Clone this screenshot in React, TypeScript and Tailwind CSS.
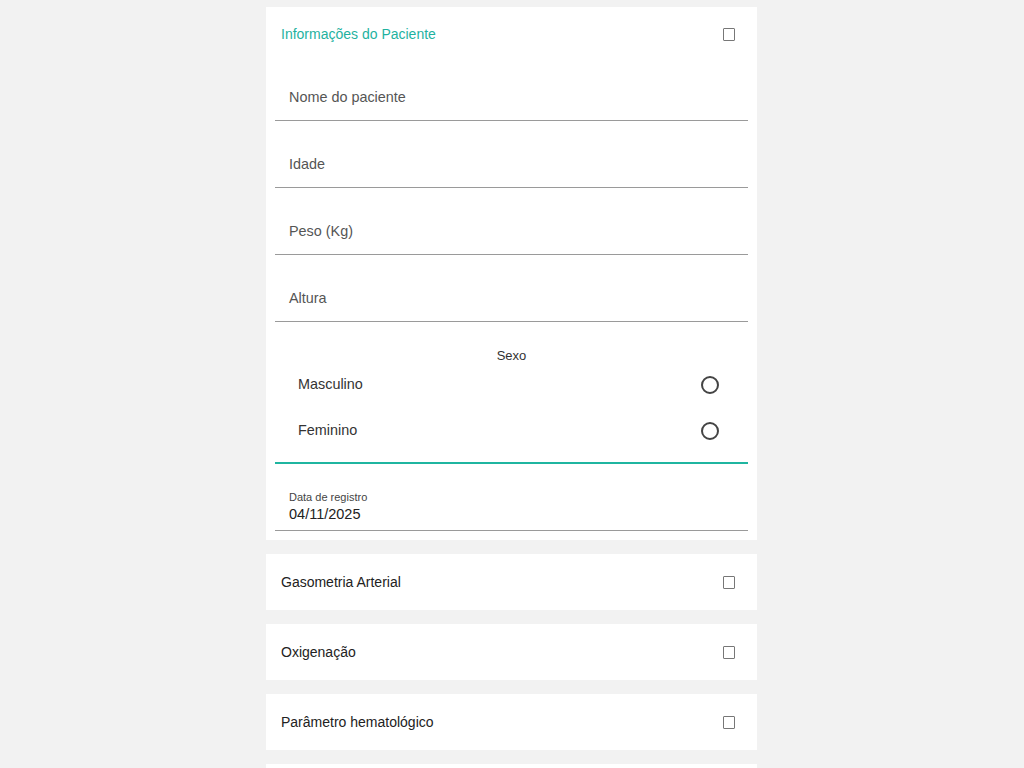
import React from 'react';

const font = { fontFamily: '"Liberation Sans", Arial, sans-serif' };

function SquareIcon() {
  return <span className="block w-[12px] h-[13px] border border-[#777] rounded-[1px]" />;
}

function Field({ label }: { label: string }) {
  return (
    <div className="h-[67px] flex items-end border-b border-[#9a9a9a]">
      <span className="pl-[14px] pb-[11px] text-[14.4px] text-[#555]">{label}</span>
    </div>
  );
}

function Radio({ label }: { label: string }) {
  return (
    <div className="h-[46px] flex items-center justify-between pl-[23px] pr-[29px]">
      <span className="text-[14.4px] text-[#333]">{label}</span>
      <span className="block w-[18px] h-[18px] rounded-full border-2 border-[#444]" />
    </div>
  );
}

function Section({ title }: { title: string }) {
  return (
    <div className="bg-white h-[56px] flex items-center justify-between pl-[15px] pr-[22px]">
      <span className="text-[14px] text-[#222]">{title}</span>
      <SquareIcon />
    </div>
  );
}

export default function App() {
  return (
    <div className="h-screen overflow-hidden bg-[#f2f2f2] pl-[266px] pt-[7px]" style={font}>
      <div className="w-[491px] flex flex-col gap-[14px]">
        <div className="bg-white pb-[9px]">
          <div className="h-[55px] flex items-center justify-between pl-[15px] pr-[22px]">
            <span className="text-[14px] text-[#1fb29f]">Informações do Paciente</span>
            <SquareIcon />
          </div>
          <div className="px-[9px]">
            <div className="-mt-[8px]">
              <Field label="Nome do paciente" />
              <Field label="Idade" />
              <Field label="Peso (Kg)" />
              <Field label="Altura" />
            </div>
            <div className="border-b-2 border-[#1fb5a0] pt-[26px] pb-[8px]">
              <div className="text-center text-[13px] leading-[16px] text-[#333] -mb-[2px]">Sexo</div>
              <Radio label="Masculino" />
              <Radio label="Feminino" />
            </div>
            <div className="border-b border-[#9a9a9a] pt-[26px] pb-[6px] pl-[14px]">
              <div className="text-[11px] text-[#444] leading-[14px]">Data de registro</div>
              <div className="text-[14.5px] text-[#222] leading-[20px]">04/11/2025</div>
            </div>
          </div>
        </div>
        <Section title="Gasometria Arterial" />
        <Section title="Oxigenação" />
        <Section title="Parâmetro hematológico" />
        <div className="bg-white h-[56px]" />
      </div>
    </div>
  );
}
